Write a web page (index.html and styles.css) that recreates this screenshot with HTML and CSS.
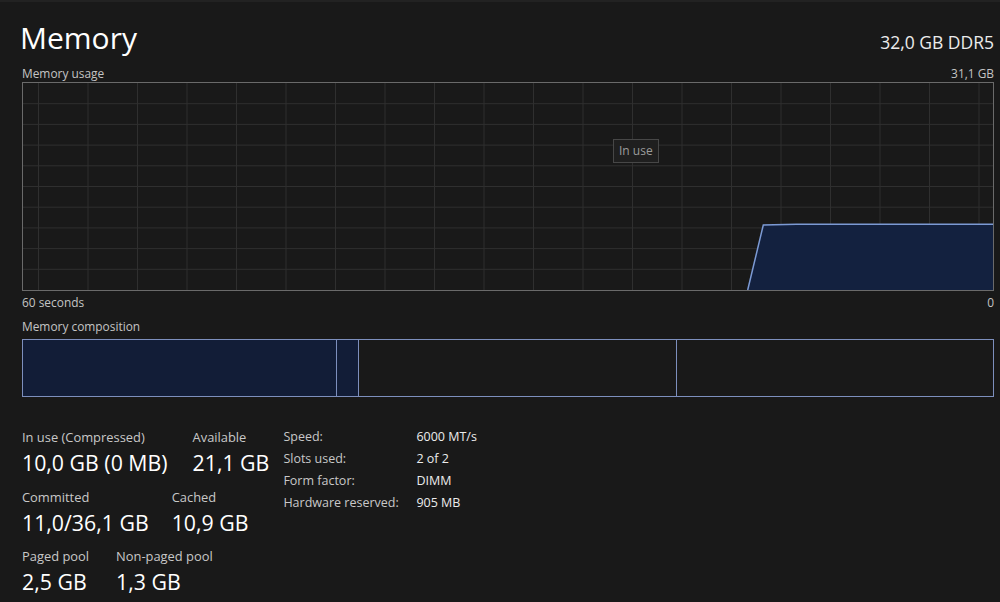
FILE: index.html
```html
<!DOCTYPE html>
<html lang="en">
<head>
    <meta charset="UTF-8">
    <meta name="viewport" content="width=device-width, initial-scale=1.0">
    <title>Memory</title>
    <link rel="stylesheet" href="styles.css">
</head>
<body>
<main class="page">
    <header class="head">
        <h1>Memory</h1>
        <div class="total">32,0 GB DDR5</div>
    </header>

    <div class="caption">
        <span>Memory usage</span>
        <span>31,1 GB</span>
    </div>
    <div class="chart">
        <svg class="grid" viewBox="0 0 970 207" preserveAspectRatio="none">
            <g class="lines">
                <line x1="0" y1="20.7" x2="970" y2="20.7"/>
                <line x1="0" y1="41.4" x2="970" y2="41.4"/>
                <line x1="0" y1="62.1" x2="970" y2="62.1"/>
                <line x1="0" y1="82.8" x2="970" y2="82.8"/>
                <line x1="0" y1="103.5" x2="970" y2="103.5"/>
                <line x1="0" y1="124.2" x2="970" y2="124.2"/>
                <line x1="0" y1="144.9" x2="970" y2="144.9"/>
                <line x1="0" y1="165.6" x2="970" y2="165.6"/>
                <line x1="0" y1="186.3" x2="970" y2="186.3"/>
                <line x1="15.5" y1="0" x2="15.5" y2="207"/>
                <line x1="65" y1="0" x2="65" y2="207"/>
                <line x1="114.5" y1="0" x2="114.5" y2="207"/>
                <line x1="164" y1="0" x2="164" y2="207"/>
                <line x1="213.5" y1="0" x2="213.5" y2="207"/>
                <line x1="263" y1="0" x2="263" y2="207"/>
                <line x1="312.5" y1="0" x2="312.5" y2="207"/>
                <line x1="362" y1="0" x2="362" y2="207"/>
                <line x1="411.5" y1="0" x2="411.5" y2="207"/>
                <line x1="461" y1="0" x2="461" y2="207"/>
                <line x1="510.5" y1="0" x2="510.5" y2="207"/>
                <line x1="560" y1="0" x2="560" y2="207"/>
                <line x1="609.5" y1="0" x2="609.5" y2="207"/>
                <line x1="659" y1="0" x2="659" y2="207"/>
                <line x1="708.5" y1="0" x2="708.5" y2="207"/>
                <line x1="758" y1="0" x2="758" y2="207"/>
                <line x1="807.5" y1="0" x2="807.5" y2="207"/>
                <line x1="857" y1="0" x2="857" y2="207"/>
                <line x1="906.5" y1="0" x2="906.5" y2="207"/>
                <line x1="956" y1="0" x2="956" y2="207"/>
            </g>
            <!-- usage history, newest sample on the right -->
            <polygon class="area" points="724.7,207 740.3,142 773.7,141.3 970,141.3 970,207"/>
            <polyline class="trace" points="724.7,207 740.3,142 773.7,141.3 970,141.3"/>
        </svg>
        <div class="tip">In use</div>
    </div>
    <div class="caption axis">
        <span>60 seconds</span>
        <span>0</span>
    </div>

    <div class="caption">
        <span>Memory composition</span>
    </div>
    <div class="composition">
        <div class="part used" style="width: 313px"></div>
        <div class="part used" style="width: 21px"></div>
        <div class="part" style="width: 317px"></div>
        <div class="part last"></div>
    </div>

    <section class="stats">
        <div class="blocks">
            <div class="row wide">
                <div class="stat">
                    <div class="label">In use (Compressed)</div>
                    <div class="value">10,0 GB (0 MB)</div>
                </div>
                <div class="stat">
                    <div class="label">Available</div>
                    <div class="value">21,1 GB</div>
                </div>
            </div>
            <div class="row">
                <div class="stat">
                    <div class="label">Committed</div>
                    <div class="value">11,0/36,1 GB</div>
                </div>
                <div class="stat">
                    <div class="label">Cached</div>
                    <div class="value">10,9 GB</div>
                </div>
            </div>
            <div class="row pools">
                <div class="stat">
                    <div class="label">Paged pool</div>
                    <div class="value">2,5 GB</div>
                </div>
                <div class="stat">
                    <div class="label">Non-paged pool</div>
                    <div class="value">1,3 GB</div>
                </div>
            </div>
        </div>
        <dl class="specs">
            <dt>Speed:</dt><dd>6000 MT/s</dd>
            <dt>Slots used:</dt><dd>2 of 2</dd>
            <dt>Form factor:</dt><dd>DIMM</dd>
            <dt>Hardware reserved:</dt><dd>905 MB</dd>
        </dl>
    </section>
</main>
</body>
</html>
```

FILE: styles.css
```css
body {
    margin: 0;
    background-color: #191919;
    color: #e6e6e6;
    font-family: 'Open Sans', 'Noto Sans', sans-serif;
}

.page {
    border-top: 2px solid #222;
    padding: 0 6px 0 22px;
}

.head {
    display: flex;
    justify-content: space-between;
    align-items: baseline;
    height: 62px;
}

.head h1 {
    margin: 0 0 0 -2px;
    padding-top: 16px;
    font-size: 30px;
    font-weight: 400;
    line-height: 40px;
    color: #fff;
}

.total {
    font-size: 17.5px;
    color: #ececec;
}

.caption {
    display: flex;
    justify-content: space-between;
    font-size: 11.9px;
    line-height: 18px;
    color: #c4c4c4;
}

.chart {
    position: relative;
    height: 207px;
    border: 1px solid #6a6a6a;
}

.grid {
    display: block;
    width: 100%;
    height: 100%;
}

.lines line {
    stroke: #2f2f2f;
    stroke-width: 1;
}

.area {
    fill: #13213f;
}

.trace {
    fill: none;
    stroke: #7c9ad4;
    stroke-width: 1.5;
}

.tip {
    position: absolute;
    left: 590px;
    top: 56px;
    padding: 0 5px;
    height: 22px;
    line-height: 22px;
    font-size: 12px;
    color: #9c9c9c;
    background-color: #1f1f1f;
    border: 1px solid #474747;
}

.axis {
    margin: 2px 0 6px;
}

.composition {
    display: flex;
    height: 56px;
    margin-top: 4px;
    border: 1px solid #7d8fbd;
}

.part {
    border-right: 1px solid #7d8fbd;
}

.part.used {
    background-color: #121d37;
}

.part.last {
    flex: 1;
    border-right: 0;
}

.stats {
    display: flex;
    gap: 14px;
    margin-top: 30px;
}

.blocks {
    display: flex;
    flex-direction: column;
    gap: 7.5px;
}

.row {
    display: flex;
    gap: 23px;
}

.row.wide {
    gap: 25px;
}

.row.pools {
    gap: 27px;
}

.label {
    font-size: 12.9px;
    line-height: 20px;
    color: #c8c8c8;
}

.value {
    font-size: 21.3px;
    line-height: 32px;
    color: #fff;
}

.specs {
    display: grid;
    grid-template-columns: 133px auto;
    grid-auto-rows: 22px;
    margin: -1px 0 0;
    font-size: 12.5px;
    line-height: 22px;
}

.specs dt {
    color: #c8c8c8;
}

.specs dd {
    margin: 0;
    color: #ececec;
}
```
